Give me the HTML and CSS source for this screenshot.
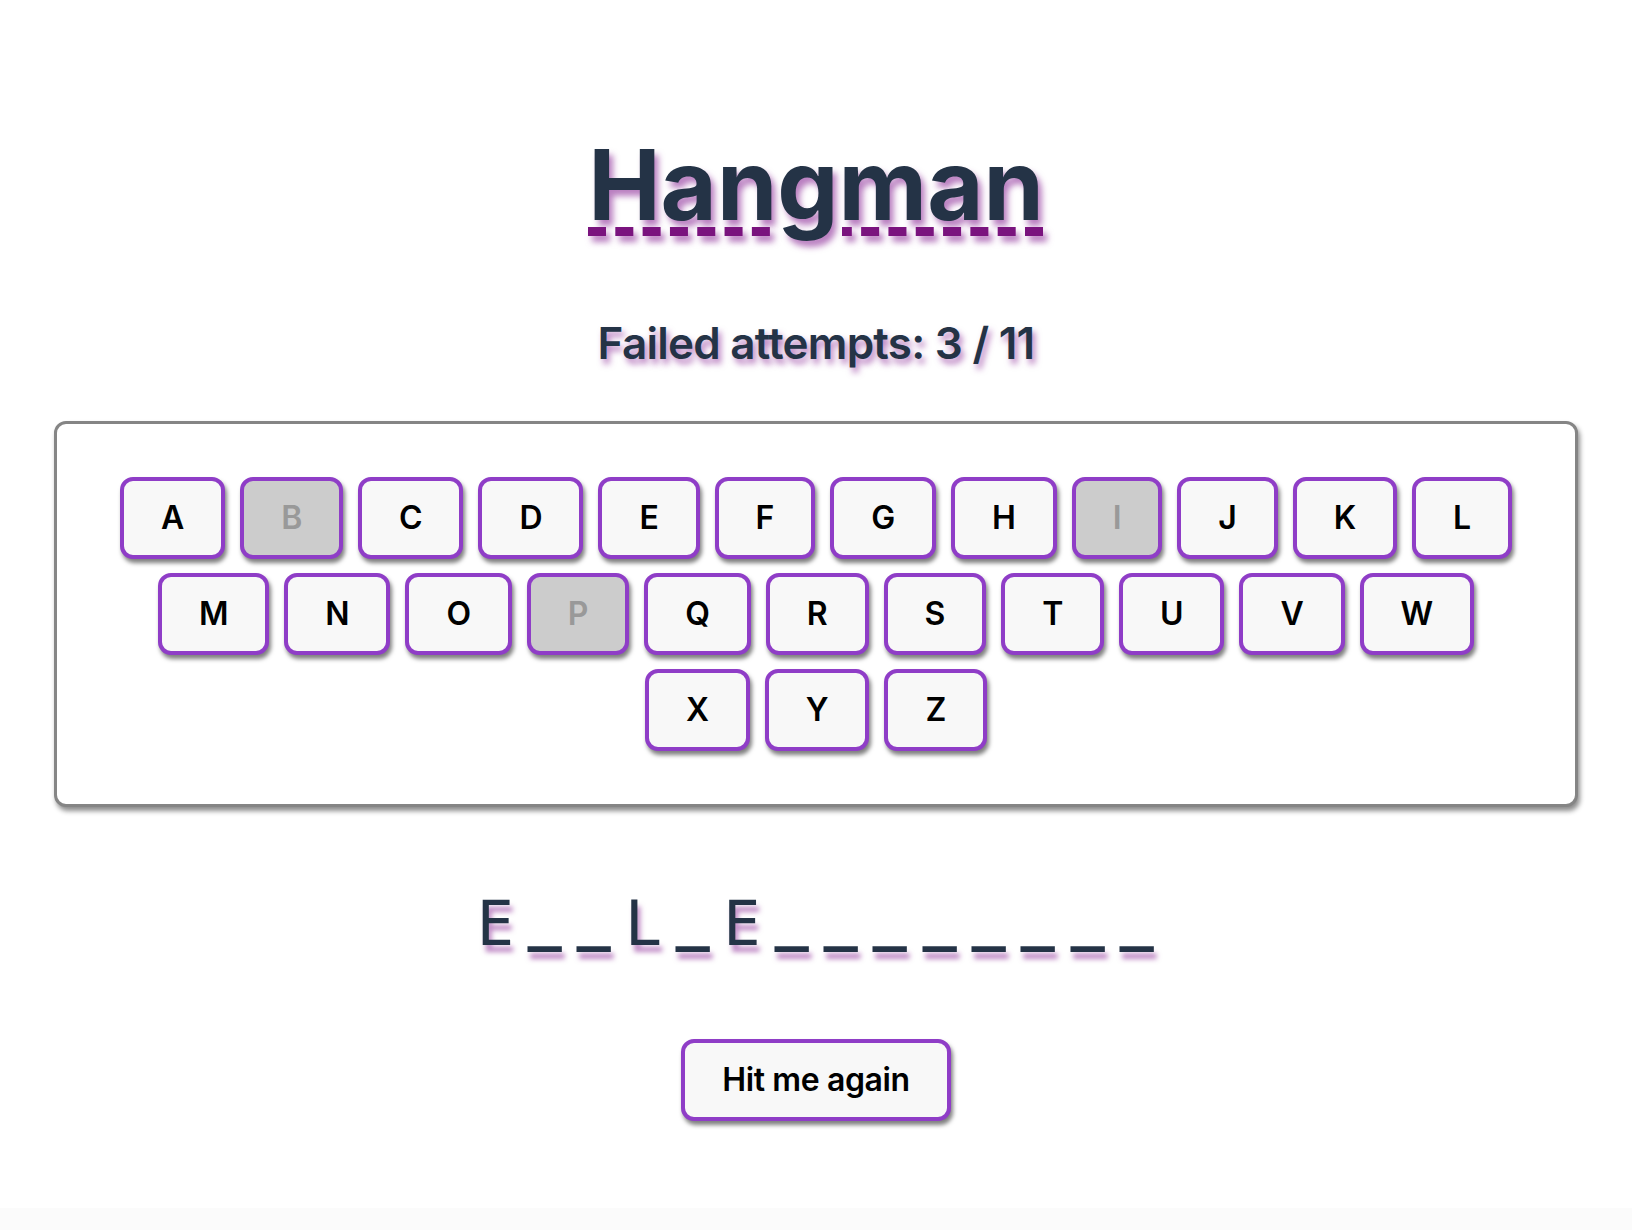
FILE: index.html
```html
<!DOCTYPE html>
<html lang="en">
<head>
<meta charset="utf-8">
<title>Hangman</title>
<link rel="stylesheet" href="styles.css">
</head>
<body>
<main class="app">
  <h1 class="title">Hangman</h1>
  <p class="attempts">Failed attempts: 3 / 11</p>
  <section class="keyboard">
    <div class="key-row">
      <button class="key">A</button>
      <button class="key is-used">B</button>
      <button class="key">C</button>
      <button class="key">D</button>
      <button class="key">E</button>
      <button class="key">F</button>
      <button class="key">G</button>
      <button class="key">H</button>
      <button class="key is-used">I</button>
      <button class="key">J</button>
      <button class="key">K</button>
      <button class="key">L</button>
    </div>
    <div class="key-row">
      <button class="key">M</button>
      <button class="key">N</button>
      <button class="key">O</button>
      <button class="key is-used">P</button>
      <button class="key">Q</button>
      <button class="key">R</button>
      <button class="key">S</button>
      <button class="key">T</button>
      <button class="key">U</button>
      <button class="key">V</button>
      <button class="key">W</button>
    </div>
    <div class="key-row">
      <button class="key">X</button>
      <button class="key">Y</button>
      <button class="key">Z</button>
    </div>
  </section>
  <p class="word"><span class="ch">E</span><span class="ch blank">_</span><span class="ch blank">_</span><span class="ch">L</span><span class="ch blank">_</span><span class="ch">E</span><span class="ch blank">_</span><span class="ch blank">_</span><span class="ch blank">_</span><span class="ch blank">_</span><span class="ch blank">_</span><span class="ch blank">_</span><span class="ch blank">_</span><span class="ch blank">_</span></p>
  <button class="key again">Hit me again</button>
</main>
</body>
</html>
```
FILE: styles.css
```css
html {
  background: #fbfbfb;
}

body {
  margin: 0;
  font-family: Inter, "Noto Sans", sans-serif;
}

.app {
  background: #ffffff;
  display: flex;
  flex-direction: column;
  align-items: center;
  padding: 137px 54px 87px;
}

.title {
  margin: 0;
  font-size: 97px;
  line-height: 96px;
  font-weight: 700;
  color: #243346;
  text-decoration: underline dashed #7a137e;
  text-decoration-thickness: 9px;
  text-underline-offset: 7px;
  text-shadow: 4px 6px 6px rgba(128, 20, 140, 0.55);
}

.attempts {
  margin: 88px 0 0;
  font-size: 44px;
  line-height: 44px;
  font-weight: 600;
  color: #243346;
  letter-spacing: -0.75px;
  text-shadow: 3px 5px 6px rgba(128, 20, 140, 0.55);
}

.keyboard {
  margin-top: 56px;
  align-self: stretch;
  border: 3px solid #858585;
  border-radius: 12px;
  box-shadow: 2px 4px 5px rgba(0, 0, 0, 0.45);
  padding: 53px 0;
  display: flex;
  flex-direction: column;
  gap: 14px;
  background: #ffffff;
}

.key-row {
  display: flex;
  justify-content: center;
  gap: 15px;
}

.key {
  font-family: Inter, "Noto Sans", sans-serif;
  font-size: 32px;
  line-height: 40px;
  font-weight: 600;
  letter-spacing: -0.2px;
  color: #000000;
  background: #f8f8f8;
  border: 4px solid #8f3dc7;
  border-radius: 13px;
  padding: 17px 37px;
  box-shadow: 2px 4px 4px rgba(0, 0, 0, 0.5);
  cursor: pointer;
}

.key.is-used {
  background: #cccccc;
  color: #999999;
}

.word {
  margin: 86px 0 0;
  display: flex;
  font-family: "DejaVu Sans Mono", "Liberation Mono", monospace;
  font-size: 62px;
  line-height: 62px;
  color: #243346;
  text-shadow: 3px 7px 5px rgba(128, 20, 140, 0.5);
}

.ch {
  margin: 0 6px;
}

.blank {
  display: inline-block;
  font-weight: 700;
  transform: translateY(-8px) scaleX(0.92);
}

.again {
  margin-top: 84px;
  letter-spacing: -0.4px;
}
```
